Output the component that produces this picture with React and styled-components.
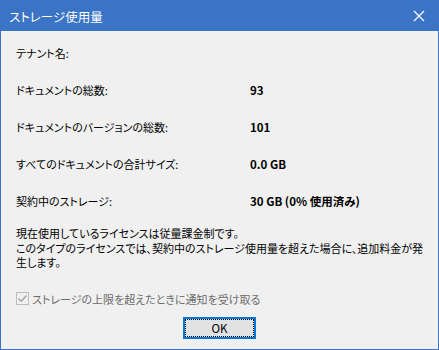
import React from 'react';
import styled, { createGlobalStyle } from 'styled-components';

const rows = [
  { label: 'テナント名:', value: '' },
  { label: 'ドキュメントの総数:', value: '93' },
  { label: 'ドキュメントのバージョンの総数:', value: '101' },
  { label: 'すべてのドキュメントの合計サイズ:', value: '0.0 GB' },
  { label: '契約中のストレージ:', value: '30 GB (0% 使用済み)' },
];

const noticeLines = [
  '現在使用しているライセンスは従量課金制です。',
  'このタイプのライセンスでは、契約中のストレージ使用量を超えた場合に、追加料金が発',
  '生します。',
];

const App = () => {
  return (
    <>
      <GlobalStyle />
      <Window>
        <TitleBar>
          <Title>ストレージ使用量</Title>
          <CloseButton>
            <svg width="12" height="12" viewBox="0 0 12 12">
              <path d="M1 1 L11 11 M11 1 L1 11" stroke="#fff" strokeWidth="1.2" />
            </svg>
          </CloseButton>
        </TitleBar>
        <Body>
          <InfoGrid>
            {rows.map((row, idx) => (
              <React.Fragment key={idx}>
                <Label>{row.label}</Label>
                <Value>{row.value}</Value>
              </React.Fragment>
            ))}
          </InfoGrid>
          <Notice>
            {noticeLines.map((line, idx) => (
              <NoticeLine key={idx}>{line}</NoticeLine>
            ))}
          </Notice>
          <CheckRow>
            <CheckBox>
              <svg width="11" height="11" viewBox="0 0 11 11">
                <path d="M1.5 5.5 L4.2 8.2 L9.5 2.5" stroke="#a3a3a3" strokeWidth="1.4" fill="none" />
              </svg>
            </CheckBox>
            <CheckLabel>ストレージの上限を超えたときに通知を受け取る</CheckLabel>
          </CheckRow>
          <ButtonRow>
            <OkButton>OK</OkButton>
          </ButtonRow>
        </Body>
      </Window>
    </>
  );
};

const GlobalStyle = createGlobalStyle`
  body {
    margin: 0;
    background: #f0f0f0;
  }
  * {
    box-sizing: border-box;
  }
`;

const Window = styled.div`
  width: 439px;
  height: 350px;
  border: 1px solid #3b73c5;
  background: #f0f0f0;
  display: flex;
  flex-direction: column;
  font-family: "Noto Sans CJK JP", "Noto Sans", sans-serif;
  font-feature-settings: "palt";
  font-size: 11px;
  color: #000;
`;

const TitleBar = styled.div`
  height: 30px;
  flex-shrink: 0;
  background: #3b73c5;
  display: flex;
  align-items: center;
  justify-content: space-between;
  padding: 0 0 0 8px;
`;

const Title = styled.div`
  color: #fff;
  font-size: 12.5px;
`;

const CloseButton = styled.div`
  width: 46px;
  height: 30px;
  display: flex;
  align-items: center;
  justify-content: center;
  margin-right: -4px;
`;

const Body = styled.div`
  flex: 1;
  padding: 14px 15px 0 15px;
  display: flex;
  flex-direction: column;
`;

const InfoGrid = styled.div`
  display: grid;
  grid-template-columns: 234px 1fr;
  row-gap: 21px;
  line-height: 16px;
`;

const Label = styled.div``;

const Value = styled.div`
  font-weight: bold;
  font-size: 11.5px;
`;

const Notice = styled.div`
  margin-top: 17px;
  line-height: 14.5px;
`;

const NoticeLine = styled.div`
  white-space: nowrap;
`;

const CheckRow = styled.div`
  margin-top: 21px;
  display: flex;
  align-items: center;
  gap: 3px;
  height: 16px;
`;

const CheckBox = styled.div`
  width: 13px;
  height: 13px;
  border: 1px solid #bcbcbc;
  background: #f0f0f0;
  display: flex;
  align-items: center;
  justify-content: center;
`;

const CheckLabel = styled.span`
  color: #6d6d6d;
`;

const ButtonRow = styled.div`
  margin-top: 10px;
  display: flex;
  justify-content: center;
`;

const OkButton = styled.button`
  width: 73px;
  height: 22px;
  border: 2px solid #0078d7;
  background: #e1e1e1;
  outline: 1px dotted #000;
  outline-offset: -3px;
  font-family: "Noto Sans CJK JP", "Noto Sans", sans-serif;
  font-size: 11.5px;
  padding: 0;
  color: #000;
  line-height: 16px;
`;

export default App;
